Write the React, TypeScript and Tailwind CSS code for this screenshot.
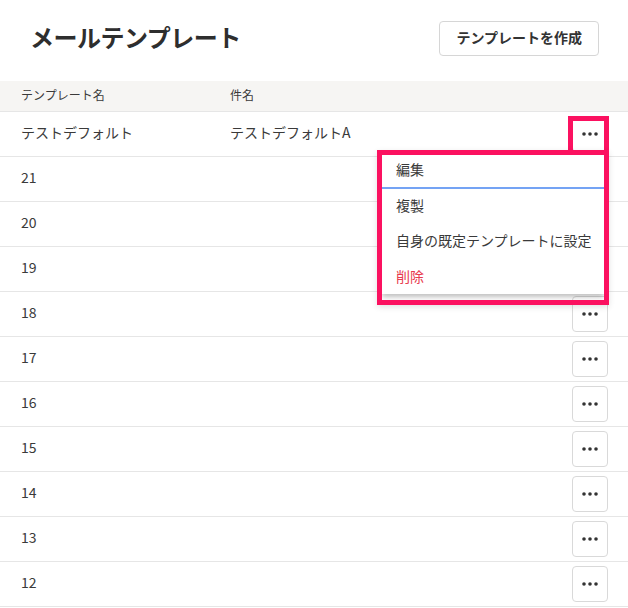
import React from "react";

const rows = [
  { name: "テストデフォルト", subject: "テストデフォルトA" },
  { name: "21", subject: "" },
  { name: "20", subject: "" },
  { name: "19", subject: "" },
  { name: "18", subject: "" },
  { name: "17", subject: "" },
  { name: "16", subject: "" },
  { name: "15", subject: "" },
  { name: "14", subject: "" },
  { name: "13", subject: "" },
  { name: "12", subject: "" },
];

// three dots
function Dots() {
  return (
    <svg width="16" height="4" viewBox="0 0 16 4" fill="#333">
      <circle cx="2" cy="2" r="1.8" />
      <circle cx="8" cy="2" r="1.8" />
      <circle cx="14" cy="2" r="1.8" />
    </svg>
  );
}

function MoreButton() {
  return (
    <button className="flex h-[36px] w-[36px] items-center justify-center rounded-[4px] border border-[#d9d9d9] bg-white">
      <Dots />
    </button>
  );
}

export default function App() {
  return (
    <div
      className="relative h-[608px] w-[628px] overflow-hidden bg-white text-[#3a3a3a]"
      style={{ fontFamily: '"Noto Sans CJK JP", "Noto Sans", sans-serif' }}
    >
      {/* Page header */}
      <div className="flex items-center justify-between pb-[25px] pl-[30px] pr-[29px] pt-[21px]">
        <h1 className="mb-[4px] text-[24px] font-bold leading-none tracking-[-0.5px] text-[#2e2e2e]">
          メールテンプレート
        </h1>
        <button className="h-[35px] rounded-[4px] border border-[#d6d6d6] bg-white px-[16px] pb-[2px] text-[14px] font-bold text-[#333]">
          テンプレートを作成
        </button>
      </div>

      {/* Table */}
      <div className="flex h-[31px] items-center border-b border-[#e6e6e6] bg-[#f6f5f3] pb-[2px] text-[12px]">
        <div className="w-[230px] pl-[21px]">テンプレート名</div>
        <div>件名</div>
      </div>
      {rows.map((row) => (
        <div
          key={row.name}
          className="flex h-[45px] items-center border-b border-[#e6e6e6] pr-[20px] text-[14px]"
        >
          <div className="w-[230px] pb-[4px] pl-[21px]">{row.name}</div>
          <div className="flex-1 pb-[4px]">{row.subject}</div>
          <MoreButton />
        </div>
      ))}

      {/* Annotation around the open button */}
      <div className="absolute left-[568px] top-[116px] h-[39px] w-[41px] border-[5px] border-[#fb1160]" />

      {/* Dropdown menu with annotation frame */}
      <div className="absolute left-[377px] top-[150px] h-[155px] w-[232px] border-[5px] border-[#fb1160] shadow-[0_2px_6px_rgba(0,0,0,0.12)]">
        <div className="h-full w-full overflow-hidden">
          <div className="bg-white text-[14px] shadow-[0_3px_5px_rgba(0,0,0,0.25)]">
            <div className="flex h-[32px] items-center pb-[3px] pl-[14px]">編集</div>
            <div className="h-[2px] bg-[#74a3f4]" />
            <div className="flex h-[35px] items-center pb-[2px] pl-[14px]">複製</div>
            <div className="flex h-[35px] items-center pb-[2px] pl-[14px]">自身の既定テンプレートに設定</div>
            <div className="flex h-[35px] items-center pl-[14px] text-[#e8394e]">削除</div>
          </div>
        </div>
      </div>
    </div>
  );
}
